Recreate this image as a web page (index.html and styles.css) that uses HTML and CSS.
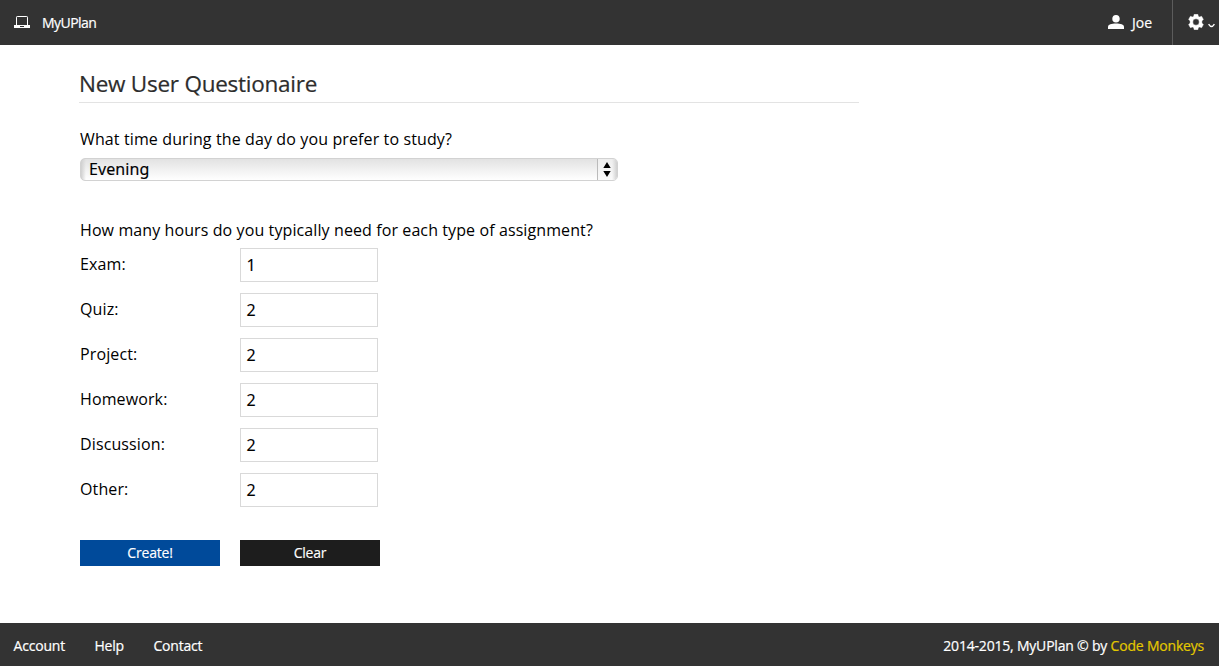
FILE: index.html
```html
<!DOCTYPE html>
<html lang="en">
<head>
<meta charset="utf-8">
<title>MyUPlan</title>
<link rel="stylesheet" href="styles.css">
</head>
<body>
<header class="topbar">
  <a class="brand">
    <svg class="laptop" width="16" height="12" viewBox="0 0 16 12"><path d="M2.5 9V1.2Q2.5.5 3.2.5h9.6q.7 0 .7.7V9" fill="none" stroke="#fff"/><path d="M0 9h16v3H0z" fill="#fff"/><path d="M6 10h4v1H6z" fill="#333"/></svg>
    <span class="brand-name">MyUPlan</span>
  </a>
  <nav class="tools">
    <a class="user">
      <svg class="person" width="16" height="14" viewBox="0 0 16 14"><ellipse cx="8" cy="3.8" rx="3.7" ry="3.8" fill="#fff"/><path d="M0 14v-2.2C0 9.6 3.5 8.5 8 8.5s8 1.1 8 3.3V14z" fill="#fff"/></svg>
      <span class="user-name">Joe</span>
    </a>
    <a class="settings">
      <svg class="gear" width="16" height="16" viewBox="0 0 16 16"><path fill="#fff" fill-rule="evenodd" stroke="#fff" stroke-width=".4" stroke-linejoin="round" d="M6.200.2h3.600l.5 2 1.300.75 2-.65 1.800 3.100-1.500 1.500v2.200l1.500 1.500-1.800 3.100-2-.65-1.300.75-.5 2H6.200l-.5-2-1.300-.75-2 .65-1.800-3.100 1.500-1.500V6.900L.6 5.400l1.800-3.100 2 .65 1.300-.75zM8 4.800a3.200 3.200 0 1 0 0 6.400 3.200 3.200 0 0 0 0-6.400z"/></svg>
      <svg class="chevron" width="7" height="5" viewBox="0 0 7 5"><path d="M.6 1.100Q2.300 3.600 3.500 3.600T6.400 1.100" fill="none" stroke="#fff" stroke-width="1.500"/></svg>
    </a>
  </nav>
</header>
<main class="content">
  <h1 class="title"><span class="title-text">New User Questionaire</span></h1>
  <form class="form">
    <p class="question"><span>What time during the day do you prefer to study?</span></p>
    <div class="select">
      <span class="select-value">Evening</span>
      <span class="stepper"><svg width="8" height="15" viewBox="0 0 8 15"><path d="M4 0l3.700 6H.3zM4 15L.3 9h7.400z"/></svg></span>
    </div>
    <p class="question hours"><span>How many hours do you typically need for each type of assignment?</span></p>
    <div class="row"><label class="label">Exam:</label><div class="field">1</div></div>
    <div class="row"><label class="label">Quiz:</label><div class="field">2</div></div>
    <div class="row"><label class="label">Project:</label><div class="field">2</div></div>
    <div class="row"><label class="label">Homework:</label><div class="field">2</div></div>
    <div class="row"><label class="label">Discussion:</label><div class="field">2</div></div>
    <div class="row"><label class="label">Other:</label><div class="field">2</div></div>
    <div class="actions">
      <button type="button" class="button primary">Create!</button>
      <button type="button" class="button">Clear</button>
    </div>
  </form>
</main>
<footer class="footer">
  <nav class="links"><a>Account</a><a>Help</a><a>Contact</a></nav>
  <div class="credit">2014-2015, MyUPlan © by <a class="team">Code Monkeys</a></div>
</footer>
</body>
</html>
```

FILE: styles.css
```css
* { box-sizing: border-box; }
body {
  margin: 0;
  height: 666px;
  display: flex;
  flex-direction: column;
  background: #fff;
  color: #000;
  font: 16px/22px "Open Sans", sans-serif;
  white-space: nowrap;
}
.topbar {
  height: 45px;
  display: flex;
  justify-content: space-between;
  background: #333;
  color: #fff;
  font-size: 14px;
  letter-spacing: -0.55px;
  -webkit-text-stroke: 0.2px;
}
.brand { display: flex; align-items: center; padding-left: 14px; gap: 12px; }
.laptop { margin-top: -1px; }
.tools { display: flex; }
.user { display: flex; align-items: center; gap: 8px; padding-right: 20px; }
.user-name { letter-spacing: 0; }
.person { margin-top: -1px; }
.settings {
  display: flex;
  align-items: center;
  width: 47px;
  padding-left: 15px;
  gap: 4px;
  border-left: 1px solid #5c5c5c;
}
.gear { margin-top: -1px; }
.chevron { margin-top: 5px; }
.content { flex: 1; width: 859px; padding-left: 79px; }
.title {
  height: 58px;
  margin: 0;
  padding-top: 24px;
  border-bottom: 1px solid #e3e3e3;
  color: #2d2d2d;
  font-size: 22.5px;
  font-weight: 400;
  line-height: 30px;
  letter-spacing: -0.25px;
  -webkit-text-stroke: 0.2px;
}
.form { padding: 25px 0 0 1px; }
.question { margin: 0; height: 30px; letter-spacing: 0.12px; }
.hours { margin-top: 38px; height: 29px; letter-spacing: 0.1px; }
.select {
  display: flex;
  justify-content: space-between;
  width: 538px;
  height: 23px;
  padding-left: 8px;
  border: 1px solid #d2d2d2;
  border-radius: 5px;
  background: linear-gradient(90deg, #d0d0d0, rgba(220,220,220,0) 5px), linear-gradient(#e2e2e2, #f1f1f1 50%, #fff);
  font-family: "Noto Sans", sans-serif;
  line-height: 21px;
}
.select-value { letter-spacing: 0.1px; -webkit-text-stroke: 0.15px; }
.stepper {
  display: flex;
  align-items: center;
  width: 20px;
  padding-left: 5px;
  border-left: 1px solid #bbb;
  border-radius: 0 4px 4px 0;
  background: linear-gradient(90deg, rgba(220,220,220,0) 14px, #d0d0d0), linear-gradient(#eee, #fafafa);
}
.row { display: flex; height: 45px; }
.label { width: 160px; padding-top: 5px; letter-spacing: 0.12px; }
.field {
  width: 138px;
  height: 34px;
  padding-left: 5.5px;
  border: 1px solid #d9d9d9;
  font-family: "Noto Sans", sans-serif;
  line-height: 32px;
  -webkit-text-stroke: 0.1px;
}
.actions { display: flex; gap: 20px; padding-top: 22px; }
.button {
  width: 140px;
  height: 26px;
  padding: 0;
  border: 0;
  background: #1d1d1d;
  color: #fff;
  font: 14px/26px "Open Sans", sans-serif;
  letter-spacing: -0.2px;
  -webkit-text-stroke: 0.15px;
}
.primary { background: #004a9a; }
.footer {
  height: 43px;
  display: flex;
  justify-content: space-between;
  align-items: center;
  padding: 3px 15px 0 13.5px;
  background: #333;
  color: #fff;
  font-size: 14px;
  letter-spacing: -0.2px;
  -webkit-text-stroke: 0.2px;
}
.links { display: flex; gap: 29.5px; }
.team { color: #e3c800; }
```
